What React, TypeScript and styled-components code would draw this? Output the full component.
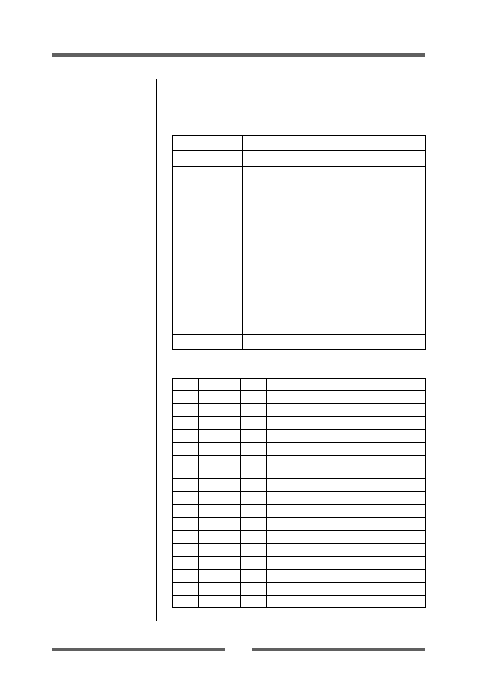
import React from "react";
import styled, { createGlobalStyle } from "styled-components";

const Global = createGlobalStyle`
  html, body { margin: 0; padding: 0; background: #fff; }
  body { font-family: "Liberation Sans", Arial, sans-serif; }
`;

const Page = styled.div`
  width: 477px;
  height: 674px;
  padding: 53px 52px 0;
  box-sizing: border-box;
  display: flex;
  flex-direction: column;
`;

const HeaderBar = styled.div`
  height: 4px;
  width: 373px;
  background: #606060;
`;

const Main = styled.div`
  display: flex;
  margin-top: 22px;
`;

const Margin = styled.div`
  width: 104px;
  flex: none;
`;

const Body = styled.div`
  border-left: 1px solid #000;
  padding: 56px 0 13px 15px;
  display: flex;
  flex-direction: column;
  gap: 28px;
`;

const Grid = styled.div<{ $cols: string; $rows: string }>`
  display: grid;
  grid-template-columns: ${(p) => p.$cols};
  grid-template-rows: ${(p) => p.$rows};
  border-left: 1px solid #000;
  border-top: 1px solid #000;
  width: 254px;
  box-sizing: border-box;
`;

const Cell = styled.div`
  border-right: 1px solid #000;
  border-bottom: 1px solid #000;
  box-sizing: border-box;
`;

const Footer = styled.div`
  display: flex;
  gap: 27px;
  margin-top: 27px;
`;

const FooterBar = styled.div`
  width: 173px;
  height: 3px;
  background: #606060;
`;

const t1Rows = [15, 16, 168, 15];
const t2Rows = [12, 13, 13, 13, 13, 13, 23, 13, 13, 13, 13, 13, 13, 13, 13, 13, 12];

export default function App() {
  return (
    <>
      <Global />
      <Page>
        <HeaderBar />
        <Main>
          <Margin />
          <Body>
            <Grid $cols="70px 183px" $rows={t1Rows.map((r) => r + "px").join(" ")}>
              {t1Rows.flatMap((_, i) => [<Cell key={i + "a"} />, <Cell key={i + "b"} />])}
            </Grid>
            <Grid $cols="26px 42px 26px 159px" $rows={t2Rows.map((r) => r + "px").join(" ")}>
              {t2Rows.flatMap((_, i) => [0, 1, 2, 3].map((c) => <Cell key={i + "-" + c} />))}
            </Grid>
          </Body>
        </Main>
        <Footer>
          <FooterBar />
          <FooterBar />
        </Footer>
      </Page>
    </>
  );
}
